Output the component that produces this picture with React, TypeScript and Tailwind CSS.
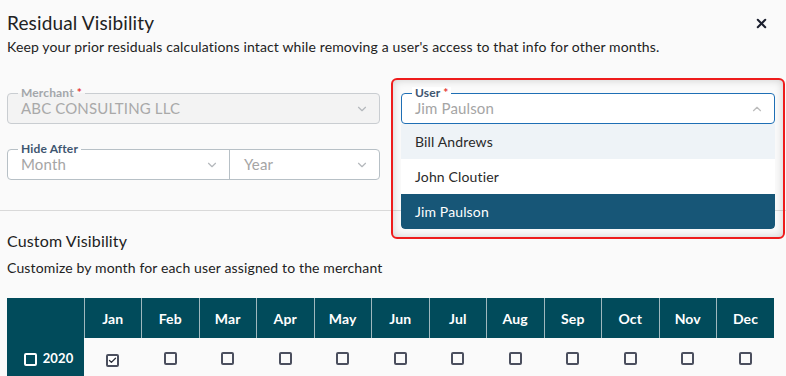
import { X, ChevronDown, ChevronUp, Check } from "lucide-react";

const months = ["Jan", "Feb", "Mar", "Apr", "May", "Jun", "Jul", "Aug", "Sep", "Oct", "Nov", "Dec"];

const Box = ({ checked, light }: { checked?: boolean; light?: boolean }) => (
  <span
    className={`inline-flex h-[13px] w-[13px] items-center justify-center rounded-[2px] border-2 ${
      light ? "border-white" : "border-[#4b4f5e]"
    } ${checked ? "bg-white" : ""}`}
  >
    {checked && <Check size={9} strokeWidth={3.5} className="text-[#2b2f3a]" />}
  </span>
);

const Legend = ({ text, color }: { text: string; color: string }) => (
  <span className={`absolute -top-[7px] left-[10px] px-[3px] text-[12px] font-bold leading-[12px] ${color}`}>
    {text} <span className="text-[#e53935]">*</span>
  </span>
);

export default function App() {
  return (
    <div className="relative min-h-screen overflow-hidden bg-[#fafafa] font-['Lato',sans-serif] tracking-[0.14px] text-[#222]">
      <div className="flex items-center justify-between pl-[7px] pr-[17px] pt-[11px]">
        <h1 className="text-[19px] leading-[24px] text-[#222]">Residual Visibility</h1>
        <X size={15} strokeWidth={3.2} className="text-[#1b1f2e]" />
      </div>
      <p className="mt-[2px] px-[7px] text-[14px] leading-[20px] text-[#222]">
        Keep your prior residuals calculations intact while removing a user's access to that info for other months.
      </p>

      <div className="mt-[36px] grid grid-cols-[373px_374px] gap-x-[21px] gap-y-[25px] px-[7px]">
        <div className="relative flex h-[31px] items-center justify-between rounded-[4px] border border-[#c9cdd1] bg-[#f3f3f3] pl-[13px] pr-[10px]">
          <Legend text="Merchant" color="text-[#a3a7ab] bg-[linear-gradient(#fafafa_50%,#f3f3f3_50%)]" />
          <span className="text-[15px] text-[#a9a9a9]">ABC CONSULTING LLC</span>
          <ChevronDown size={14} className="text-[#b4b8bc]" />
        </div>

        <div className="relative flex h-[31px] items-center justify-between rounded-[4px] border border-[#1e6fb5] bg-white pl-[13px] pr-[10px]">
          <Legend text="User" color="text-[#3e5670] bg-white" />
          <span className="text-[15px] text-[#a5a5a5]">Jim Paulson</span>
          <ChevronUp size={14} className="text-[#bcbcbc]" />
          <div className="absolute left-[-1px] right-[-1px] top-[30px] z-10 overflow-hidden rounded-b-[4px] bg-white text-[14px]">
            <div className="flex h-[35px] items-center bg-[#eef3f7] pl-[14px] text-[#2a2a2a]">Bill Andrews</div>
            <div className="flex h-[35px] items-center bg-white pl-[14px] text-[#2a2a2a]">John Cloutier</div>
            <div className="flex h-[35px] items-center rounded-b-[4px] bg-[#175677] pl-[14px] text-white">Jim Paulson</div>
          </div>
        </div>

        <div className="relative flex h-[31px] rounded-[4px] border border-[#b7c0c6] bg-white">
          <span className="absolute -top-[7px] left-[10px] bg-[linear-gradient(#fafafa_50%,#ffffff_50%)] px-[3px] text-[12px] font-bold leading-[12px] text-[#3e5670]">
            Hide After
          </span>
          <div className="flex w-[222px] items-center justify-between border-r border-[#b7c0c6] pl-[13px] pr-[10px]">
            <span className="text-[15px] text-[#a5a5a5]">Month</span>
            <ChevronDown size={14} className="text-[#b4b8bc]" />
          </div>
          <div className="flex flex-1 items-center justify-between pl-[14px] pr-[10px]">
            <span className="text-[15px] text-[#a5a5a5]">Year</span>
            <ChevronDown size={14} className="text-[#b4b8bc]" />
          </div>
        </div>
      </div>

      <div className="mt-[30px] h-px bg-[#d9d9d9]" />

      <h2 className="mt-[19px] px-[7px] text-[16px] leading-[22px] text-[#222]">Custom Visibility</h2>
      <p className="mt-[6px] px-[7px] text-[14px] leading-[20px] text-[#222]">
        Customize by month for each user assigned to the merchant
      </p>

      <table className="ml-[7px] mt-[20px] w-[767px] table-fixed border-collapse text-[14px] font-bold">
        <thead>
          <tr className="h-[40px] bg-[#014b5b] text-white">
            <th className="w-[77px] border-r border-[#9fb8be]" />
            {months.map((m) => (
              <th key={m} className="border-r border-[#9fb8be] last:border-r-0">
                {m}
              </th>
            ))}
          </tr>
        </thead>
        <tbody>
          <tr className="h-[42px]">
            <td className="bg-[#014b5b] text-[13px] text-white">
              <div className="flex items-center justify-center gap-[6px] pl-[6px]">
                <Box light />
                <span>2020</span>
              </div>
            </td>
            {months.map((m, i) => (
              <td key={m} className="text-center">
                <Box checked={i === 0} />
              </td>
            ))}
          </tr>
        </tbody>
      </table>

      <div className="pointer-events-none absolute left-[391px] top-[78px] h-[161px] w-[394px] rounded-[6px] border-2 border-[#ee1c1c] shadow-[inset_0_0_9px_rgba(0,0,0,0.18)]" />
    </div>
  );
}
